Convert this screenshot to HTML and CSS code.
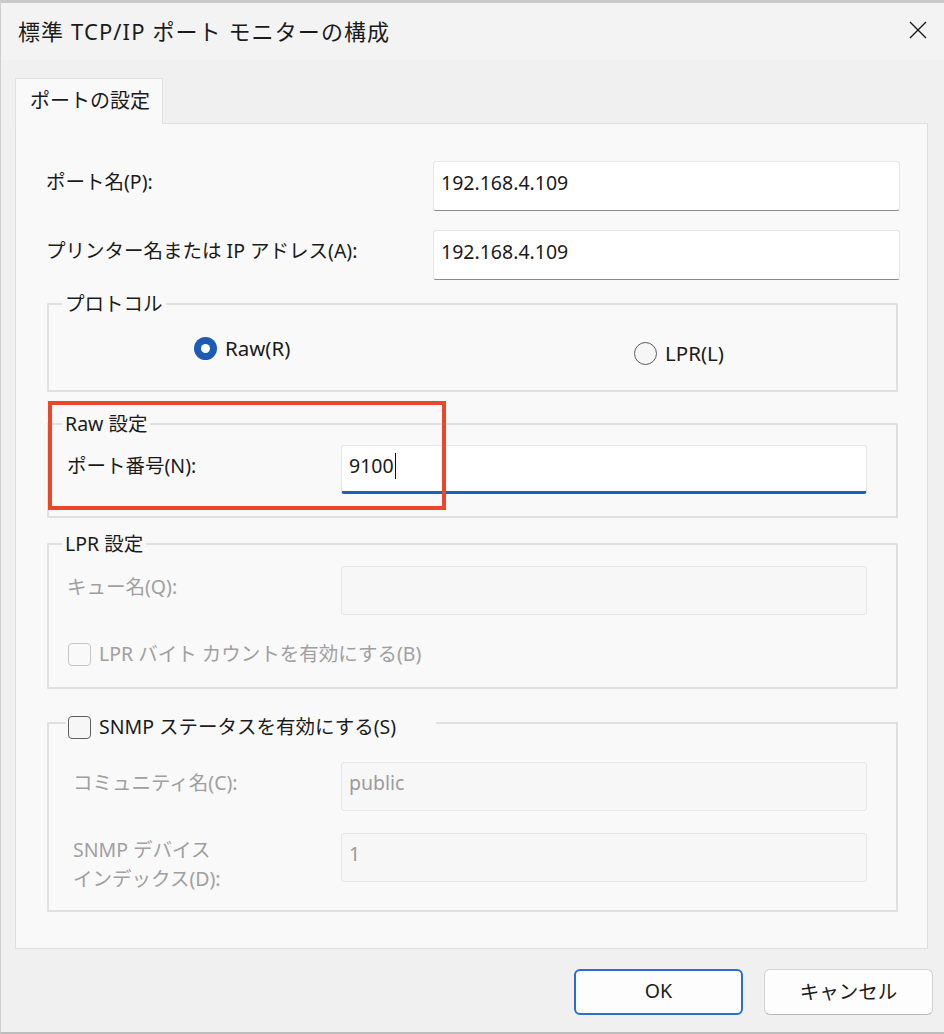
FILE: index.html
```html
<!DOCTYPE html>
<html lang="ja">
<head>
<meta charset="utf-8">
<title>標準 TCP/IP ポート モニターの構成</title>
<link rel="stylesheet" href="styles.css">
</head>
<body>
<div class="window">
  <div class="titlebar">
    <span class="title">標準 TCP/IP ポート モニターの構成</span>
    <svg class="close" width="20" height="20" viewBox="0 0 20 20"><path d="M2 2 L18 18 M18 2 L2 18" stroke="#1a1a1a" stroke-width="1.4" fill="none"/></svg>
  </div>
  <div class="tabs"><div class="tab">ポートの設定</div></div>
  <div class="panel">
    <div class="row row-first">
      <span class="label label-main">ポート名(P):</span>
      <div class="input input-main">192.168.4.109</div>
    </div>
    <div class="row row-second">
      <span class="label label-main">プリンター名または IP アドレス(A):</span>
      <div class="input input-main">192.168.4.109</div>
    </div>

    <fieldset class="group group-protocol">
      <legend>プロトコル</legend>
      <div class="radios">
        <span class="radio-item radio-raw"><span class="radio checked"></span>Raw(R)</span>
        <span class="radio-item radio-lpr"><span class="radio"></span>LPR(L)</span>
      </div>
    </fieldset>

    <div class="raw-wrap">
      <fieldset class="group group-raw">
        <legend>Raw 設定</legend>
        <div class="grow grow-raw">
          <span class="label label-sub">ポート番号(N):</span>
          <div class="input input-sub focused">9100<span class="caret"></span></div>
        </div>
      </fieldset>
      <div class="highlight"></div>
    </div>

    <fieldset class="group group-lpr">
      <legend>LPR 設定</legend>
      <div class="grow grow-queue">
        <span class="label label-sub disabled">キュー名(Q):</span>
        <div class="input input-sub input-disabled"></div>
      </div>
      <div class="check-row">
        <span class="checkbox checkbox-disabled"></span>
        <span class="disabled">LPR バイト カウントを有効にする(B)</span>
      </div>
    </fieldset>

    <fieldset class="group group-snmp">
      <legend class="legend-check"><span class="checkbox"></span><span>SNMP ステータスを有効にする(S)</span></legend>
      <div class="grow grow-snmp grow-community">
        <span class="label label-snmp disabled">コミュニティ名(C):</span>
        <div class="input input-sub input-disabled">public</div>
      </div>
      <div class="grow grow-snmp grow-index">
        <span class="label label-snmp label-two disabled">SNMP デバイス<br>インデックス(D):</span>
        <div class="input input-sub input-disabled">1</div>
      </div>
    </fieldset>
  </div>
  <div class="footer">
    <button class="btn btn-primary">OK</button>
    <button class="btn">キャンセル</button>
  </div>
</div>
</body>
</html>
```

FILE: styles.css
```css
* { box-sizing: border-box; }
html, body { margin: 0; padding: 0; }
body {
  background: #f0f0f0;
  font-family: "Noto Sans", "Noto Sans CJK JP", sans-serif;
  color: #1b1b1b;
}
.window {
  width: 944px;
  height: 1034px;
  background: #f0f0f0;
  border-top: 3px solid #c9c9c9;
  border-left: 1px solid #cfcfcf;
  border-bottom: 2px solid #bdbdbd;
  display: flex;
  flex-direction: column;
}
.titlebar {
  height: 57px;
  background: #f3f3f3;
  display: flex;
  align-items: center;
  justify-content: space-between;
  padding: 0 16px 4px 17px;
}
.title { font-size: 22px; letter-spacing: 1.1px; }
.close { display: block; }
.tabs {
  padding: 18px 0 0 14px;
  display: flex;
}
.tab {
  width: 148px;
  height: 46px;
  background: #f9f9f9;
  border: 1px solid #e0e0e0;
  border-bottom: none;
  margin-bottom: -1px;
  font-size: 20px;
  padding: 6px 0 0 14px;
  position: relative;
  z-index: 1;
}
.panel {
  margin-left: 14px;
  width: 913px;
  height: 826px;
  background: #f9f9f9;
  border: 1px solid #dedede;
  padding: 37px 26px 0 30px;
}
.row {
  display: flex;
  align-items: center;
  height: 50px;
}
.row-second { margin-top: 19px; }
.label { font-size: 19.5px; line-height: 29px; white-space: nowrap; flex: none; }
.grow > .label, .row > .label { padding-bottom: 9px; }
.label-main { width: 387px; }
.input {
  background: #fff;
  border: 1px solid #e6e6e6;
  border-bottom: 1px solid #8a8a8a;
  border-radius: 3px;
  font-size: 19.5px;
  display: flex;
  align-items: center;
  padding: 0 0 8px 7px;
  flex: none;
}
.input-main { width: 467px; height: 50px; }
.group {
  margin: 0 0 0 1px;
  padding: 0;
  width: 851px;
  min-width: 0;
  border: 2px solid #e0e0e0;
  border-radius: 1px;
}
.group legend {
  font-size: 19.5px;
  line-height: 24px;
  padding: 0 3px;
  margin-left: 13px;
}
.group-protocol { margin-top: 12px; }
.radios {
  height: 74px;
  display: flex;
  align-items: flex-start;
  padding-left: 145px;
}
.radio-item {
  display: flex;
  align-items: center;
  font-size: 20.5px;
  height: 24px;
  gap: 8px;
}
.radio-raw { width: 440px; margin-top: 20px; }
.radio-lpr { margin-top: 25px; }
.radio {
  width: 23px;
  height: 23px;
  border-radius: 50%;
  border: 1.5px solid #5a5a5a;
  background: #f6f6f6;
  display: flex;
  align-items: center;
  justify-content: center;
}
.radio.checked {
  border: none;
  background: #1c5bb6;
}
.radio.checked::after {
  content: "";
  width: 9px;
  height: 9px;
  border-radius: 50%;
  background: #fff;
}
.raw-wrap { position: relative; margin-top: 20px; }
.grow { display: flex; align-items: center; }
.grow-raw { margin-top: 9px; padding: 0 0 22px 18px; }
.grow-queue { margin-top: 10px; padding-left: 18px; }
.label-sub { width: 274px; }
.input-sub { width: 526px; height: 49px; }
.focused {
  border-bottom: 3px solid #1f5fbf;
  padding-bottom: 6px;
}
.caret {
  display: inline-block;
  width: 1.5px;
  height: 26px;
  background: #111;
  margin-left: 1px;
}
.highlight {
  position: absolute;
  left: 2px;
  top: -11px;
  width: 398px;
  height: 109px;
  border: 4px solid #e9482b;
  pointer-events: none;
}
.group-lpr { margin-top: 14px; }
.disabled { color: #a0a0a0; }
.input-disabled {
  background: #f7f7f7;
  border: 1px solid #e6e6e6;
  color: #9b9b9b;
}
.check-row {
  display: flex;
  align-items: center;
  gap: 8px;
  margin-top: 28px;
  padding: 0 0 22px 19px;
  font-size: 19.5px;
  height: 22px;
  box-sizing: content-box;
}
.check-row > span:last-child { padding-bottom: 4px; }
.checkbox {
  width: 23px;
  height: 23px;
  border: 1.5px solid #5e5e5e;
  border-radius: 4px;
  background: #f6f6f6;
  flex: none;
}
.checkbox-disabled { border-color: #c6c6c6; background: #f9f9f9; }
.group-snmp { margin-top: 18px; }
.group legend.legend-check {
  display: flex;
  align-items: center;
  gap: 8px;
  height: 32px;
  padding: 8px 40px 0 2px;
  margin-left: 17px;
}
.grow-snmp { padding-left: 24px; }
.grow-community { margin-top: 23px; }
.grow-index { margin-top: 22px; align-items: flex-start; padding-bottom: 17px; }
.label-snmp { width: 268px; }
.grow > .label-two { margin-top: 2px; padding-bottom: 0; }
.footer {
  display: flex;
  justify-content: flex-end;
  gap: 21px;
  padding: 20px 11px 0 0;
}
.btn {
  width: 169px;
  height: 46px;
  border: 1px solid #d3d3d3;
  border-bottom-color: #b8b8b8;
  border-radius: 6px;
  background: #fdfdfd;
  font-family: "Noto Sans", "Noto Sans CJK JP", sans-serif;
  font-size: 19.5px;
  color: #1b1b1b;
  padding: 0 0 3px 0;
}
.btn-primary {
  border: 2px solid #2c6bd0;
}
```
